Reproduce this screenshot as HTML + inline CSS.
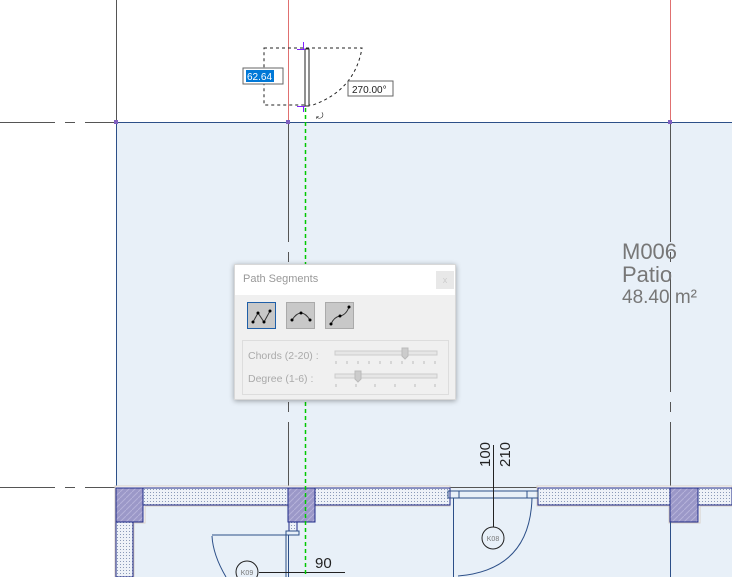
<!DOCTYPE html>
<html><head><meta charset="utf-8"><style>
html,body{margin:0;padding:0;width:732px;height:577px;overflow:hidden;background:#fff;font-family:"Liberation Sans",sans-serif}
#dlg{position:absolute;left:234px;top:264px;width:222px;height:136px;background:#f0f0f0;box-shadow:0 1px 5px rgba(0,0,0,.35);border:1px solid #d8d8d8;box-sizing:border-box}
#dlg .tb{height:30px;background:#fff;position:relative}
#dlg .tb span{position:absolute;left:8px;top:8px;font-size:11px;color:#999}
#dlg .x{position:absolute;right:1px;top:6px;width:18px;height:18px;background:#e8e8e8;color:#ccc;font-size:9px;text-align:center;line-height:18px}
.btn{position:absolute;top:37px;width:29px;height:27px;background:#c8c8c8;border:1px solid #aaa;box-sizing:border-box}
.grp{position:absolute;left:7px;top:75px;width:207px;height:55px;border:1px solid #ddd;box-sizing:border-box}
.lbl{position:absolute;left:13px;font-size:10.5px;color:#aaa}
</style></head><body>
<svg width="732" height="577" style="position:absolute;left:0;top:0">
<defs>
<pattern id="dots" width="3" height="3" patternUnits="userSpaceOnUse"><rect width="3" height="3" fill="#eef2f8"/><rect width="1" height="1" fill="#8b9ab8"/></pattern>
<pattern id="hat" width="6" height="6" patternUnits="userSpaceOnUse"><rect width="6" height="6" fill="#9b98c8"/><path d="M0 6L6 0" stroke="#b5b2da" stroke-width="1"/></pattern>
</defs>
<rect x="116" y="122" width="616" height="455" fill="#e8f0f8"/>
<line x1="116.5" y1="0" x2="116.5" y2="122" stroke="#555"/>
<line x1="288.5" y1="0" x2="288.5" y2="122" stroke="#e07070"/>
<line x1="670.5" y1="0" x2="670.5" y2="122" stroke="#e07070"/>
<line x1="0" y1="122.5" x2="116" y2="122.5" stroke="#555" stroke-dasharray="55,10,10,10"/>
<line x1="116" y1="122.5" x2="732" y2="122.5" stroke="#2c4f88"/>
<line x1="116.5" y1="122" x2="116.5" y2="487" stroke="#2c4f88"/>
<line x1="288.5" y1="122" x2="288.5" y2="487" stroke="#555" stroke-dasharray="120,10,10,10"/>
<line x1="670.5" y1="122" x2="670.5" y2="487" stroke="#555" stroke-dasharray="120,10,10,10"/>
<line x1="0" y1="487.5" x2="116" y2="487.5" stroke="#555" stroke-dasharray="55,10,10,10"/>
<line x1="450" y1="487.5" x2="537" y2="487.5" stroke="#555"/>
<rect x="114" y="120" width="4" height="4" fill="#8060c0"/><rect x="286" y="120" width="4" height="4" fill="#8060c0"/><rect x="668" y="120" width="4" height="4" fill="#8060c0"/>
<path d="M115 486H450V506H145V523H134V577H115Z" fill="#fff" stroke="#d8cfc8"/>
<path d="M537 486H732V506H700V523H669V506H537Z" fill="#fff" stroke="#d8cfc8"/>
<rect x="116" y="488" width="334" height="17" fill="url(#dots)" stroke="#1e2a88"/>
<rect x="116" y="505" width="17" height="72" fill="url(#dots)" stroke="#1e2a88"/>
<rect x="538" y="488" width="194" height="17" fill="url(#dots)" stroke="#1e2a88"/>
<rect x="116" y="488" width="27" height="34" fill="url(#hat)" stroke="#1e2a88"/>
<rect x="288" y="488" width="27" height="34" fill="url(#hat)" stroke="#1e2a88"/>
<rect x="670" y="488" width="28" height="34" fill="url(#hat)" stroke="#1e2a88"/>
<rect x="289" y="522" width="8" height="9" fill="url(#dots)" stroke="#1e2a88"/>
<rect x="448" y="491" width="90" height="7" fill="none" stroke="#2c4f88"/>
<line x1="459" y1="491" x2="459" y2="498" stroke="#2c4f88"/><line x1="527" y1="491" x2="527" y2="498" stroke="#2c4f88"/>
<line x1="453.5" y1="498" x2="453.5" y2="577" stroke="#2c4f88"/>
<path d="M532 498Q530 570 458 576" fill="none" stroke="#2c4f88"/>
<line x1="493.5" y1="445" x2="493.5" y2="527" stroke="#222"/>
<circle cx="493" cy="538" r="11" fill="#e8f0f8" stroke="#222"/>
<text x="493" y="541" font-size="7" fill="#777" text-anchor="middle">K08</text>
<text transform="translate(490,467) rotate(-90)" font-size="15" fill="#222">100</text>
<text transform="translate(510,467) rotate(-90)" font-size="15" fill="#222">210</text>
<line x1="670.5" y1="522" x2="670.5" y2="577" stroke="#2c4f88"/>
<path d="M212 535H299V531H286V577" fill="none" stroke="#2c4f88"/>
<line x1="288.5" y1="535" x2="288.5" y2="577" stroke="#2c4f88"/>
<path d="M212 536Q213 555 226 577" fill="none" stroke="#2c4f88"/>
<circle cx="247" cy="572" r="11" fill="#e8f0f8" stroke="#222"/>
<text x="247" y="575" font-size="7" fill="#777" text-anchor="middle">K09</text>
<line x1="259" y1="572.5" x2="345" y2="572.5" stroke="#222"/>
<text x="315" y="568" font-size="15" fill="#222">90</text>
<line x1="305.5" y1="108" x2="305.5" y2="577" stroke="#00c800" stroke-width="1.5" stroke-dasharray="4,3"/>
<path d="M264 48H362Q355 90 313 105H264Z" fill="none" stroke="#222" stroke-dasharray="3,3"/>
<rect x="305" y="49" width="4" height="57" fill="#fff" stroke="#222"/>
<line x1="303.5" y1="42" x2="303.5" y2="49" stroke="#8020ff"/>
<line x1="303.5" y1="106" x2="303.5" y2="112" stroke="#8020ff"/>
<line x1="297" y1="49.5" x2="305" y2="49.5" stroke="#8020ff"/><line x1="297" y1="106.5" x2="305" y2="106.5" stroke="#8020ff"/>
<rect x="243" y="68" width="40" height="16" fill="#fff" stroke="#666"/>
<rect x="246" y="70" width="28" height="12" fill="#0078d7"/>
<text x="247" y="80" font-size="10" fill="#fff">62.64</text>
<rect x="348" y="81" width="45" height="15" fill="#fff" stroke="#666"/>
<text x="352" y="93" font-size="10" fill="#222">270.00°</text>
<text x="316" y="119" font-size="9" fill="#222">⤾</text>
<text x="622" y="259" font-size="22" fill="#777">M006</text>
<text x="622" y="282" font-size="22" fill="#777">Patio</text>
<text x="622" y="303" font-size="19" fill="#777">48.40 m²</text>
</svg>
<div id="dlg">
<div class="tb"><span>Path Segments</span><div class="x">x</div></div>
<div class="btn" style="left:12px;border:1px solid #1f5fa8"><svg width="27" height="25"><polyline points="5,19 10,10 16,19 22,8" fill="none" stroke="#333"/><g fill="#000"><circle cx="5" cy="19" r="1.5"/><circle cx="10" cy="10" r="1.5"/><circle cx="16" cy="19" r="1.5"/><circle cx="22" cy="8" r="1.5"/></g></svg></div>
<div class="btn" style="left:51px"><svg width="27" height="25"><path d="M5 17Q14 3 23 17" fill="none" stroke="#333"/><g fill="#000"><circle cx="5" cy="17" r="1.5"/><circle cx="14" cy="10" r="1.5"/><circle cx="23" cy="17" r="1.5"/></g></svg></div>
<div class="btn" style="left:90px"><svg width="27" height="25"><path d="M5 21Q8 14 14 13T23 4" fill="none" stroke="#333"/><g fill="#000"><circle cx="5" cy="21" r="1.5"/><circle cx="14" cy="13" r="1.5"/><circle cx="23" cy="4" r="1.5"/></g></svg></div>
<div class="grp"></div>
<div class="lbl" style="top:85px">Chords (2-20) :</div>
<div class="lbl" style="top:108px">Degree (1-6) :</div>
<svg width="222" height="136" style="position:absolute;left:0;top:0">
<rect x="100" y="86" width="102" height="4" fill="#e6e6e6" stroke="#ccc"/>
<path d="M167 83h6v8l-3 3l-3-3z" fill="#ccc" stroke="#bbb"/>
<g stroke="#bbb"><line x1="101" y1="96" x2="101" y2="99"/><line x1="112" y1="96" x2="112" y2="99"/><line x1="123" y1="96" x2="123" y2="99"/><line x1="134" y1="96" x2="134" y2="99"/><line x1="145" y1="96" x2="145" y2="99"/><line x1="156" y1="96" x2="156" y2="99"/><line x1="167" y1="96" x2="167" y2="99"/><line x1="178" y1="96" x2="178" y2="99"/><line x1="189" y1="96" x2="189" y2="99"/><line x1="200" y1="96" x2="200" y2="99"/></g>
<rect x="100" y="109" width="102" height="4" fill="#e6e6e6" stroke="#ccc"/>
<path d="M120 106h6v8l-3 3l-3-3z" fill="#ccc" stroke="#bbb"/>
<g stroke="#bbb"><line x1="101" y1="119" x2="101" y2="122"/><line x1="121" y1="119" x2="121" y2="122"/><line x1="140" y1="119" x2="140" y2="122"/><line x1="160" y1="119" x2="160" y2="122"/><line x1="180" y1="119" x2="180" y2="122"/><line x1="200" y1="119" x2="200" y2="122"/></g>
</svg>
</div>
</body></html>
